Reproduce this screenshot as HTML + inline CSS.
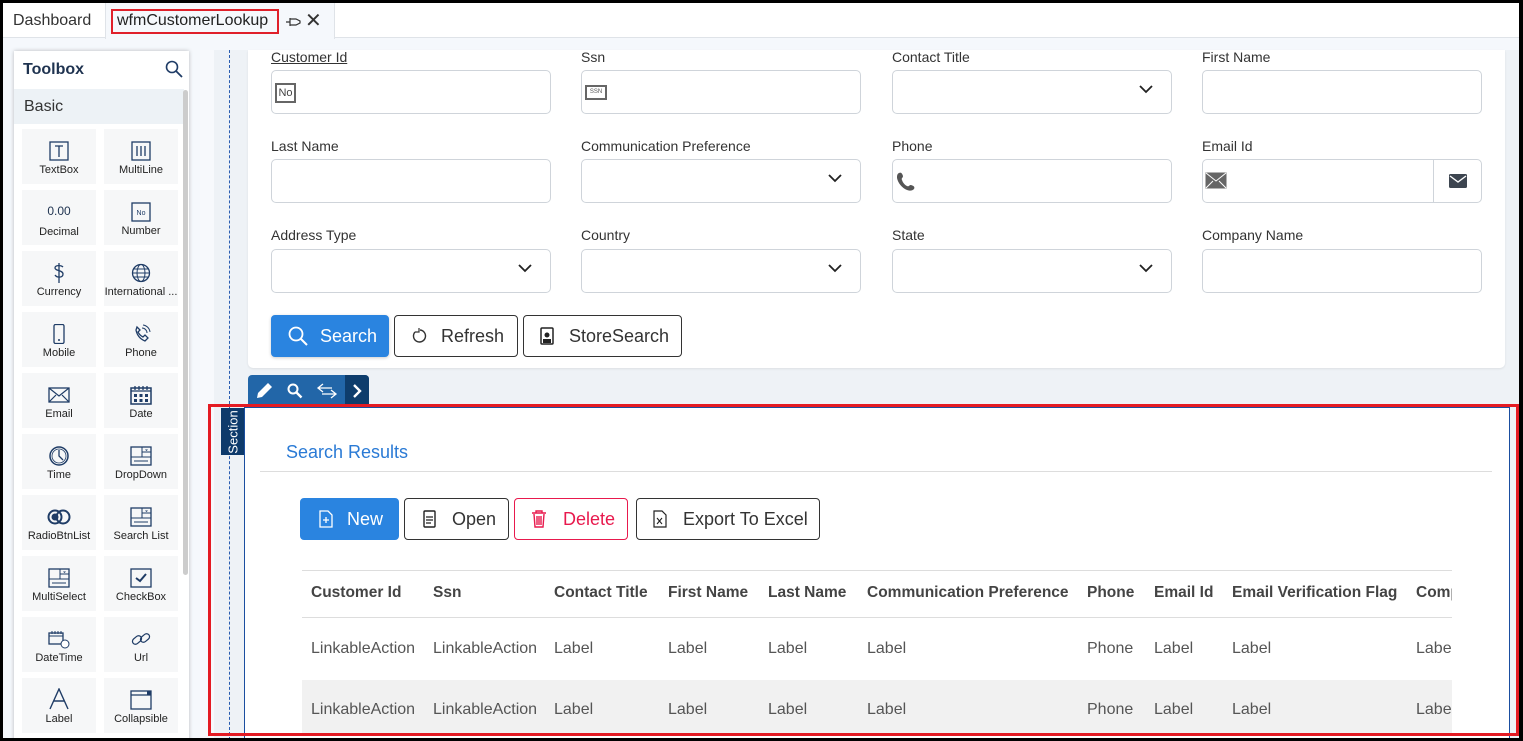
<!DOCTYPE html>
<html><head><meta charset="utf-8"><style>
*{box-sizing:border-box;margin:0;padding:0}
html,body{width:1523px;height:741px;overflow:hidden}
body{background:#000;font-family:"Liberation Sans",Arial,sans-serif;position:relative}
.a{position:absolute}
#frame{left:3px;top:3px;width:1516px;height:735px;background:#f5f8fc;overflow:hidden}
.lbl{position:absolute;font-size:14px;color:#333}
.inp{position:absolute;width:280px;height:44px;border:1px solid #cfd4da;border-radius:5px;background:#fff}
.chev{position:absolute;right:18px;top:13px}
.btn{position:absolute;height:42px;border:1px solid #333;border-radius:4px;background:#fff;font-size:18px;color:#333;display:flex;align-items:center}
.th{position:absolute;top:584px;font-size:15.5px;font-weight:bold;color:#444;white-space:nowrap}
.td{position:absolute;font-size:16px;color:#555}
.cell{position:absolute;width:74px;height:55px;background:#f6f7f8;text-align:center;font-size:11px;color:#222}
.cell svg{display:block;margin:12px auto 3px}
</style></head><body>
<div id="frame" class="a">
 <div class="a" style="left:0;top:0;width:1516px;height:35px;background:#fff;border-bottom:1px solid #dfe3e8"></div>
 <div class="a" style="left:10px;top:9px;font-size:16px;color:#333">Dashboard</div>
 <div class="a" style="left:102px;top:0;width:230px;height:36px;background:#f5f8fc;border-left:1px solid #dfe3e8;border-right:1px solid #dfe3e8"></div>
 <div class="a" style="left:108px;top:6px;width:168px;height:25px;border:2px solid #e0202a"></div>
 <div class="a" style="left:114px;top:9px;font-size:16px;color:#222">wfmCustomerLookup</div>
 <svg class="a" style="left:283px;top:13px" width="16" height="12"><path d="M0 6h4M4 2v8M4 3h6l4 2v2l-4 2H4" fill="none" stroke="#333" stroke-width="1.2"/></svg>
 <div class="a" style="left:302px;top:5px;font-size:20px;color:#333">✕</div>

 <div class="a" style="left:11px;top:48px;width:175px;height:700px;background:#fff;box-shadow:0 0 4px rgba(0,0,0,.25)"></div>
 <div class="a" style="left:20px;top:58px;font-size:16px;font-weight:bold;color:#1f3350">Toolbox</div>
 <svg class="a" style="left:162px;top:57px" width="18" height="18"><circle cx="7" cy="7" r="5.5" fill="none" stroke="#1f3c66" stroke-width="1.6"/><path d="M11 11l6 6" stroke="#1f3c66" stroke-width="1.8"/></svg>
 <div class="a" style="left:11px;top:86px;width:170px;height:35px;background:#edf2f6"></div>
 <div class="a" style="left:21px;top:95px;font-size:16px;color:#333">Basic</div>
 <div class="a" style="left:180px;top:87px;width:5px;height:485px;background:#ccc;border-radius:3px"></div>

 <div class="a" style="left:197px;top:47px;width:1319px;height:700px;background:#f7f9fc"></div>
 <div class="a" style="left:211px;top:47px;width:1305px;height:700px;background:#eef2f6"></div>
 <div class="a" style="left:226px;top:47px;width:0;height:700px;border-left:1px dashed #2a5db0"></div>

 <div class="a" style="left:245px;top:47px;width:1257px;height:318px;background:#fff;border-radius:0 0 5px 5px;box-shadow:0 1px 2px rgba(0,0,0,.08)"></div>
</div>

<div class="lbl" style="left:271px;top:49px;text-decoration:underline">Customer Id</div>
<div class="lbl" style="left:581px;top:49px">Ssn</div>
<div class="lbl" style="left:892px;top:49px">Contact Title</div>
<div class="lbl" style="left:1202px;top:49px">First Name</div>
<div class="inp" style="left:271px;top:70px"><div class="a" style="left:3px;top:12px;width:21px;height:20px;border:2px solid #666;font-size:11px;line-height:16px;text-align:center;color:#444">No</div></div>
<div class="inp" style="left:581px;top:70px"><div class="a" style="left:3px;top:14px;width:22px;height:15px;border:2px solid #666;font-size:6px;line-height:11px;text-align:center;color:#555">SSN</div></div>
<div class="inp" style="left:892px;top:70px"><svg class="chev" width="14" height="10"><path d="M1 2l6 6 6-6" fill="none" stroke="#222" stroke-width="1.8"/></svg></div>
<div class="inp" style="left:1202px;top:70px"></div>

<div class="lbl" style="left:271px;top:138px">Last Name</div>
<div class="lbl" style="left:581px;top:138px">Communication Preference</div>
<div class="lbl" style="left:892px;top:138px">Phone</div>
<div class="lbl" style="left:1202px;top:138px">Email Id</div>
<div class="inp" style="left:271px;top:159px"></div>
<div class="inp" style="left:581px;top:159px"><svg class="chev" width="14" height="10"><path d="M1 2l6 6 6-6" fill="none" stroke="#222" stroke-width="1.8"/></svg></div>
<div class="inp" style="left:892px;top:159px"><svg class="a" style="left:2px;top:10px" width="24" height="24"><path d="M4 3c2-1 3 0 4 3 0 2-2 2-1 4 1 3 3 5 5 6 2 1 2-1 4-1 3 1 4 2 3 4-2 2-4 2-7 1-5-2-9-7-10-12 0-2 0-4 2-5z" fill="#555"/></svg></div>
<div class="inp" style="left:1202px;top:159px;width:232px;border-radius:5px 0 0 5px"><svg class="a" style="left:2px;top:12px" width="22" height="17"><rect x="0.5" y="0.5" width="21" height="16" fill="#666"/><path d="M1 1l10 8 10-8M1 16l7-7M21 16l-7-7" fill="none" stroke="#fff" stroke-width="1"/></svg></div>
<div class="inp" style="left:1433px;top:159px;width:49px;border-radius:0 5px 5px 0"><svg class="a" style="left:15px;top:14px" width="18" height="14"><rect width="18" height="14" rx="1.5" fill="#3d4550"/><path d="M1 2l8 6 8-6" fill="none" stroke="#fff" stroke-width="1.4"/></svg></div>

<div class="lbl" style="left:271px;top:227px">Address Type</div>
<div class="lbl" style="left:581px;top:227px">Country</div>
<div class="lbl" style="left:892px;top:227px">State</div>
<div class="lbl" style="left:1202px;top:227px">Company Name</div>
<div class="inp" style="left:271px;top:249px"><svg class="chev" width="14" height="10"><path d="M1 2l6 6 6-6" fill="none" stroke="#222" stroke-width="1.8"/></svg></div>
<div class="inp" style="left:581px;top:249px"><svg class="chev" width="14" height="10"><path d="M1 2l6 6 6-6" fill="none" stroke="#222" stroke-width="1.8"/></svg></div>
<div class="inp" style="left:892px;top:249px"><svg class="chev" width="14" height="10"><path d="M1 2l6 6 6-6" fill="none" stroke="#222" stroke-width="1.8"/></svg></div>
<div class="inp" style="left:1202px;top:249px"></div>

<div class="btn" style="left:271px;top:315px;width:118px;background:#2a84e0;border-color:#2a84e0;color:#fff;box-shadow:0 1px 3px rgba(0,0,0,.2)"><svg style="margin:0 12px 0 16px" width="20" height="20"><circle cx="8" cy="8" r="6.5" fill="none" stroke="#fff" stroke-width="1.8"/><path d="M13 13l6 6" stroke="#fff" stroke-width="2"/></svg>Search</div>
<div class="btn" style="left:394px;top:315px;width:124px"><svg style="margin:0 14px 0 16px" width="16" height="16"><path d="M4 4a6 6 0 1 0 5-2" fill="none" stroke="#333" stroke-width="1.4"/><path d="M8 0v4h-4" fill="none" stroke="#333" stroke-width="1.2"/></svg>Refresh</div>
<div class="btn" style="left:523px;top:315px;width:159px"><svg style="margin:0 15px 0 16px" width="14" height="18"><rect x="1" y="1" width="12" height="16" rx="1" fill="none" stroke="#222" stroke-width="1.5"/><circle cx="7" cy="8" r="2.5" fill="#222"/><rect x="3" y="12" width="8" height="4" fill="#222"/></svg>StoreSearch</div>

<div class="a" style="left:248px;top:375px;width:121px;height:31px;background:#2266a8;border-radius:4px 4px 0 0"></div>
<div class="a" style="left:345px;top:375px;width:24px;height:31px;background:#0e3d6c;border-radius:0 4px 0 0"></div>
<svg class="a" style="left:255px;top:382px" width="18" height="18"><path d="M2 16l1-5L13 1l4 4L7 15z" fill="#fff"/></svg>
<svg class="a" style="left:287px;top:383px" width="16" height="16"><circle cx="6" cy="6" r="4.5" fill="none" stroke="#fff" stroke-width="2"/><path d="M9.5 9.5l5 5" stroke="#fff" stroke-width="2.4"/></svg>
<svg class="a" style="left:316px;top:382px" width="22" height="18"><path d="M7 2L2 6l5 4M2 6h14M15 8l5 4-5 4M20 12H6" fill="none" stroke="#fff" stroke-width="1.3"/></svg>
<svg class="a" style="left:352px;top:384px" width="10" height="14"><path d="M2 1l6 6-6 6" fill="none" stroke="#fff" stroke-width="2.4"/></svg>

<div class="a" style="left:244px;top:407px;width:1266px;height:331px;background:#fff;border:1px solid #1a4ea0;border-bottom:none"></div>
<div class="a" style="left:221px;top:408px;width:23px;height:47px;background:#0d3a6b"></div>
<div class="a" style="left:211px;top:422px;width:45px;height:20px;color:#fff;font-size:13px;transform:rotate(-90deg);text-align:center;line-height:20px">Section</div>

<div class="a" style="left:286px;top:442px;font-size:18px;color:#2a7ad5">Search Results</div>
<div class="a" style="left:260px;top:471px;width:1232px;height:1px;background:#ddd"></div>

<div class="btn" style="left:300px;top:498px;width:99px;background:#2a84e0;border-color:#2a84e0;color:#fff"><svg style="margin:0 14px 0 18px" width="14" height="18"><path d="M1 1h8l4 4v12H1z" fill="none" stroke="#fff" stroke-width="1.3"/><path d="M7 7v6M4 10h6" stroke="#fff" stroke-width="1.3"/></svg>New</div>
<div class="btn" style="left:404px;top:498px;width:105px"><svg style="margin:0 16px 0 18px" width="13" height="18"><rect x="1" y="1" width="11" height="16" rx="1" fill="none" stroke="#222" stroke-width="1.4"/><path d="M3 7h7M3 10h7M3 13h5" stroke="#222" stroke-width="1.3"/></svg>Open</div>
<div class="btn" style="left:514px;top:498px;width:114px;border-color:#e8194d;color:#e8194d"><svg style="margin:0 16px 0 16px" width="16" height="18"><path d="M1 3h14M5 3V1h6v2M3 4l1 13h8l1-13M6 6v9M8 6v9M10 6v9" fill="none" stroke="#e8194d" stroke-width="1.4"/></svg>Delete</div>
<div class="btn" style="left:636px;top:498px;width:184px"><svg style="margin:0 16px 0 16px" width="14" height="18"><path d="M1 1h8l4 4v12H1z" fill="none" stroke="#222" stroke-width="1.2"/><path d="M4 8l5 6M9 8l-5 6" stroke="#222" stroke-width="1.1"/></svg>Export To Excel</div>

<div class="a" style="left:302px;top:570px;width:1150px;height:1px;background:#ddd"></div>
<div class="a" style="left:302px;top:617px;width:1150px;height:1px;background:#ddd"></div>
<div class="a" style="left:302px;top:680px;width:1150px;height:56px;background:#f1f1f1"></div>
<div class="th" style="left:311px">Customer Id</div>
<div class="th" style="left:433px">Ssn</div>
<div class="th" style="left:554px">Contact Title</div>
<div class="th" style="left:668px">First Name</div>
<div class="th" style="left:768px">Last Name</div>
<div class="th" style="left:867px">Communication Preference</div>
<div class="th" style="left:1087px">Phone</div>
<div class="th" style="left:1154px">Email Id</div>
<div class="th" style="left:1232px">Email Verification Flag</div>
<div class="th" style="left:1416px;width:36px;overflow:hidden">Company</div>

<div class="td" style="left:311px;top:640px">LinkableAction</div>
<div class="td" style="left:433px;top:640px">LinkableAction</div>
<div class="td" style="left:554px;top:640px">Label</div>
<div class="td" style="left:668px;top:640px">Label</div>
<div class="td" style="left:768px;top:640px">Label</div>
<div class="td" style="left:867px;top:640px">Label</div>
<div class="td" style="left:1087px;top:640px">Phone</div>
<div class="td" style="left:1154px;top:640px">Label</div>
<div class="td" style="left:1232px;top:640px">Label</div>
<div class="td" style="left:1416px;top:640px;width:36px;overflow:hidden">Label</div>
<div class="td" style="left:311px;top:701px">LinkableAction</div>
<div class="td" style="left:433px;top:701px">LinkableAction</div>
<div class="td" style="left:554px;top:701px">Label</div>
<div class="td" style="left:668px;top:701px">Label</div>
<div class="td" style="left:768px;top:701px">Label</div>
<div class="td" style="left:867px;top:701px">Label</div>
<div class="td" style="left:1087px;top:701px">Phone</div>
<div class="td" style="left:1154px;top:701px">Label</div>
<div class="td" style="left:1232px;top:701px">Label</div>
<div class="td" style="left:1416px;top:701px;width:36px;overflow:hidden">Label</div>

<div class="a" style="left:208px;top:404px;width:1311px;height:332px;border:3px solid #e41b23"></div>

<div class="cell" style="left:22px;top:129px"><svg width="20" height="20"><rect x="1" y="1" width="18" height="18" fill="none" stroke="#1f3c66" stroke-width="1.3"/><path d="M6 5h8M10 5v11" stroke="#1f3c66" stroke-width="1.3"/></svg>TextBox</div>
<div class="cell" style="left:104px;top:129px"><svg width="20" height="20"><rect x="1" y="1" width="18" height="18" fill="none" stroke="#1f3c66" stroke-width="1.3"/><path d="M6 5v10M10 5v10M14 5v10" stroke="#1f3c66" stroke-width="1.3"/></svg>MultiLine</div>
<div class="cell" style="left:22px;top:190px"><div style="font-size:12px;margin:14px 0 8px;color:#1f3350">0.00</div>Decimal</div>
<div class="cell" style="left:104px;top:190px"><svg width="20" height="20"><rect x="1" y="1" width="18" height="18" fill="none" stroke="#1f3c66" stroke-width="1.3"/><text x="10" y="13" font-size="7" text-anchor="middle" fill="#1f3c66" font-family="Liberation Sans">No</text></svg>Number</div>
<div class="cell" style="left:22px;top:251px"><svg width="20" height="20"><path d="M14 4c-2-2-8-2-8 1s8 2 8 6-6 4-8 1M10 0v20" fill="none" stroke="#1f3c66" stroke-width="1.3"/></svg>Currency</div>
<div class="cell" style="left:104px;top:251px"><svg width="20" height="20"><circle cx="10" cy="10" r="8.5" fill="none" stroke="#1f3c66" stroke-width="1.3"/><ellipse cx="10" cy="10" rx="4" ry="8.5" fill="none" stroke="#1f3c66"/><path d="M2 10h16M3 6h14M3 14h14" stroke="#1f3c66"/></svg><span style="white-space:nowrap">International ...</span></div>
<div class="cell" style="left:22px;top:312px"><svg width="20" height="20"><rect x="5" y="0.5" width="10" height="19" rx="1.5" fill="none" stroke="#1f3c66" stroke-width="1.3"/><circle cx="10" cy="16" r="1" fill="#1f3c66"/></svg>Mobile</div>
<div class="cell" style="left:104px;top:312px"><svg width="20" height="20"><path d="M5 6c1 5 4 9 9 11l3-3-3-3-2 2c-2-1-4-3-5-5l2-2-3-3z" fill="none" stroke="#1f3c66" stroke-width="1.3"/><path d="M11 4a5 5 0 0 1 5 5M12 1a8 8 0 0 1 7 7" fill="none" stroke="#1f3c66"/></svg>Phone</div>
<div class="cell" style="left:22px;top:373px"><svg width="22" height="20"><rect x="1" y="3" width="20" height="14" fill="none" stroke="#1f3c66" stroke-width="1.3"/><path d="M1 3l10 8 10-8M1 17l7-7M21 17l-7-7" fill="none" stroke="#1f3c66" stroke-width="1.2"/></svg>Email</div>
<div class="cell" style="left:104px;top:373px"><svg width="22" height="20"><rect x="1" y="3" width="20" height="16" fill="none" stroke="#1f3c66" stroke-width="1.5"/><path d="M1 6h20M5 1v4M9 1v4M13 1v4M17 1v4" stroke="#1f3c66" stroke-width="1.3"/><path d="M4 9h3v3H4zM9.5 9h3v3h-3zM15 9h3v3h-3zM4 14h3v3H4zM9.5 14h3v3h-3zM15 14h3v3h-3z" fill="#1f3c66"/></svg>Date</div>
<div class="cell" style="left:22px;top:434px"><svg width="22" height="20"><circle cx="11" cy="10" r="9" fill="none" stroke="#1f3c66" stroke-width="1.5"/><circle cx="11" cy="10" r="7" fill="none" stroke="#1f3c66" stroke-width="0.8"/><path d="M11 4v6l4 4" fill="none" stroke="#1f3c66" stroke-width="1.3"/></svg>Time</div>
<div class="cell" style="left:104px;top:434px"><svg width="22" height="20"><rect x="1" y="1" width="20" height="18" fill="none" stroke="#1f3c66" stroke-width="1.3"/><path d="M1 11h20M12 1v10M12 6h9M4 15h14" stroke="#1f3c66"/><path d="M15 3.5h3l-1.5 1.5z" fill="#1f3c66"/></svg>DropDown</div>
<div class="cell" style="left:22px;top:495px"><svg width="24" height="20"><circle cx="8" cy="10" r="6.5" fill="none" stroke="#1f3c66" stroke-width="2"/><circle cx="16" cy="10" r="6.5" fill="none" stroke="#1f3c66" stroke-width="2"/><circle cx="8" cy="10" r="3.5" fill="#1f3c66"/></svg>RadioBtnList</div>
<div class="cell" style="left:104px;top:495px"><svg width="22" height="20"><rect x="1" y="1" width="20" height="18" fill="none" stroke="#1f3c66" stroke-width="1.3"/><path d="M1 11h20M12 1v10M12 6h9M4 15h14" stroke="#1f3c66"/><path d="M15 3.5h3l-1.5 1.5z" fill="#1f3c66"/></svg>Search List</div>
<div class="cell" style="left:22px;top:556px"><svg width="22" height="20"><rect x="1" y="1" width="20" height="18" fill="none" stroke="#1f3c66" stroke-width="1.3"/><path d="M1 11h20M12 1v10M12 6h9M4 15h14" stroke="#1f3c66"/><path d="M15 3.5h3l-1.5 1.5z" fill="#1f3c66"/></svg>MultiSelect</div>
<div class="cell" style="left:104px;top:556px"><svg width="22" height="20"><rect x="1" y="1" width="20" height="18" fill="none" stroke="#1f3c66" stroke-width="1.3"/><path d="M6 10l4 3 6-7" fill="none" stroke="#1f3c66" stroke-width="2"/></svg>CheckBox</div>
<div class="cell" style="left:22px;top:617px"><svg width="22" height="20"><rect x="1" y="4" width="14" height="11" fill="none" stroke="#1f3c66" stroke-width="1.3"/><path d="M1 7h14M4 2v3M7 2v3M10 2v3M13 2v3" stroke="#1f3c66"/><circle cx="17" cy="15" r="4" fill="#fff" stroke="#1f3c66"/></svg>DateTime</div>
<div class="cell" style="left:104px;top:617px"><svg width="22" height="20"><rect x="2" y="8" width="10" height="6" rx="3" transform="rotate(-40 7 11)" fill="none" stroke="#1f3c66" stroke-width="1.2"/><rect x="10" y="6" width="10" height="6" rx="3" transform="rotate(-40 15 9)" fill="none" stroke="#1f3c66" stroke-width="1.2"/></svg>Url</div>
<div class="cell" style="left:22px;top:678px"><svg width="22" height="22" style="margin-top:10px"><path d="M2 21L11 1l9 20M6 13h10" fill="none" stroke="#1f3c66" stroke-width="1.4"/></svg>Label</div>
<div class="cell" style="left:104px;top:678px"><svg width="22" height="20"><rect x="1" y="1" width="20" height="18" fill="none" stroke="#1f3c66" stroke-width="1.3"/><path d="M1 5h20" stroke="#1f3c66" stroke-width="1.3"/><rect x="17" y="1" width="4" height="4" fill="#1f3c66"/></svg>Collapsible</div>
</body></html>
